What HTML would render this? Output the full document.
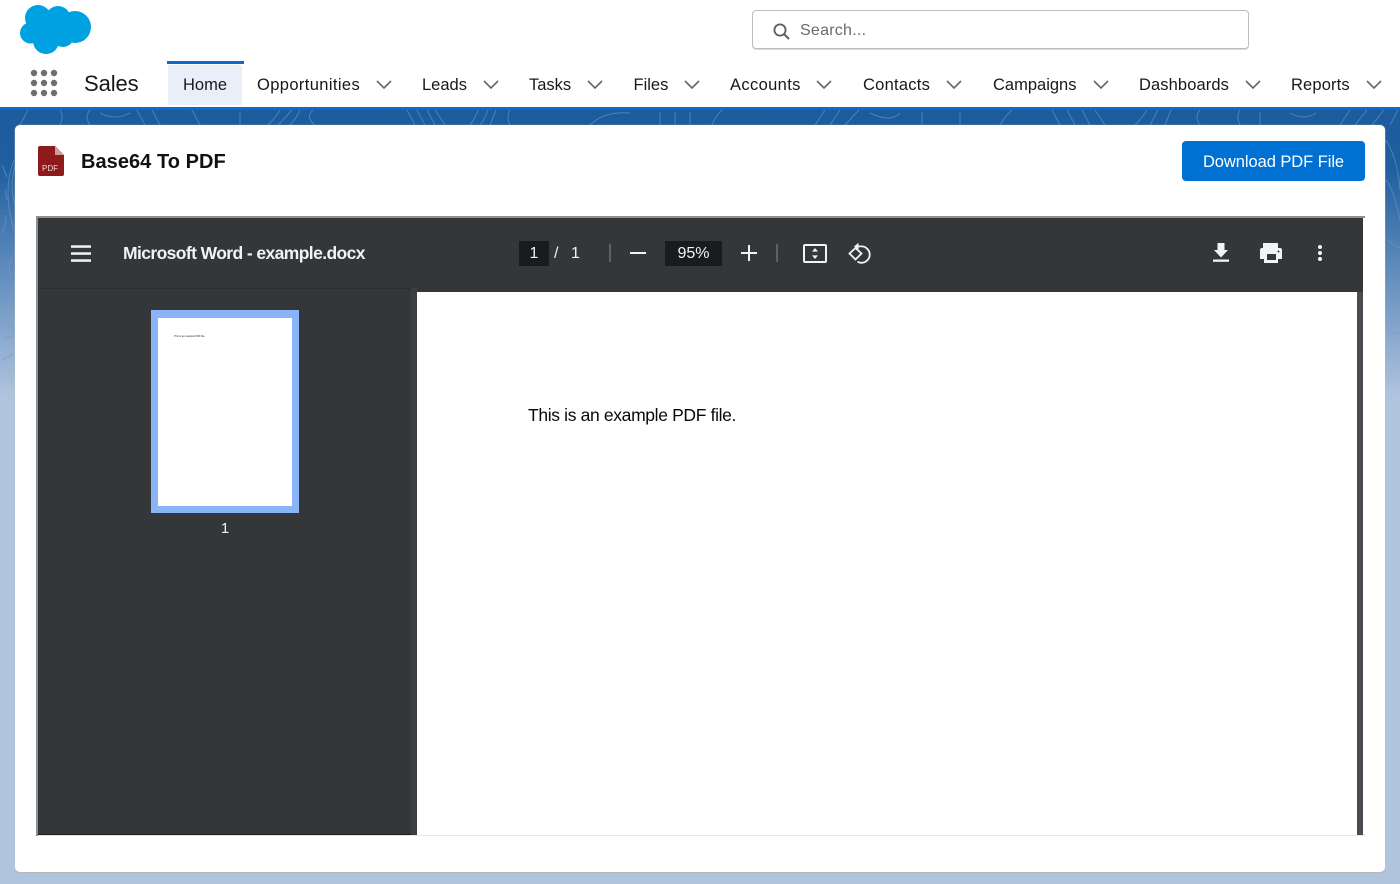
<!DOCTYPE html>
<html><head><meta charset="utf-8"><style>
html,body{margin:0;padding:0;background:#fff}
#p{position:relative;width:1400px;height:884px;overflow:hidden;font-family:"Liberation Sans",sans-serif;background:#fff}
#p div,#p span,#p svg{position:absolute;display:block}
.t{white-space:nowrap;line-height:20px}
.n{top:75px;font-size:16.5px;color:#181818}
.w{color:#fff}
</style></head><body><div id="p">
<svg style="left:18px;top:3px" width="75" height="53" viewBox="0 0 75 53"><g fill="#00a1e0"><circle cx="20" cy="15" r="13"/><circle cx="40" cy="15.500" r="12.500"/><circle cx="57" cy="24" r="16"/><circle cx="12.500" cy="30" r="10.500"/><circle cx="28" cy="38" r="13"/><circle cx="45" cy="33" r="11"/><rect x="14" y="14" width="40" height="24"/></g></svg>

<div style="left:752px;top:10px;width:495px;height:37px;border:1px solid #bdbdbd;border-radius:4px;box-shadow:0 1px 0 #ddd"></div>
<svg style="left:771px;top:21px" width="20" height="20" viewBox="0 0 20 20"><circle cx="9" cy="9" r="5.600" fill="none" stroke="#5c5c5c" stroke-width="1.800"/><path d="M13 13l5 5" stroke="#5c5c5c" stroke-width="2" fill="none"/></svg>
<div class="t" style="left:800px;top:21px;font-size:16px;color:#6b6b6b;letter-spacing:.25px">Search...</div>

<svg style="left:30px;top:69px" width="28" height="28" viewBox="0 0 28 28"><g fill="#6f6f6f"><circle cx="4" cy="4" r="3.200"/><circle cx="14" cy="4" r="3.200"/><circle cx="24" cy="4" r="3.200"/><circle cx="4" cy="14" r="3.200"/><circle cx="14" cy="14" r="3.200"/><circle cx="24" cy="14" r="3.200"/><circle cx="4" cy="24" r="3.200"/><circle cx="14" cy="24" r="3.200"/><circle cx="24" cy="24" r="3.200"/></g></svg>
<div class="t" style="left:84px;top:73px;font-size:22px;line-height:22px;color:#181818;letter-spacing:-.1px">Sales</div>

<div style="left:167px;top:61px;width:77px;height:3px;background:#0f68cf"></div>
<div style="left:168px;top:65px;width:74px;height:40px;background:#e8eff9"></div>
<div class="t n" style="left:183px">Home</div>
<div class="t n" style="left:257px;letter-spacing:.38px">Opportunities</div>
<div class="t n" style="left:422px">Leads</div>
<div class="t n" style="left:529px">Tasks</div>
<div class="t n" style="left:633.500px">Files</div>
<div class="t n" style="left:730px;letter-spacing:.36px">Accounts</div>
<div class="t n" style="left:863px;letter-spacing:.25px">Contacts</div>
<div class="t n" style="left:993px">Campaigns</div>
<div class="t n" style="left:1139px;letter-spacing:.1px">Dashboards</div>
<div class="t n" style="left:1291px;letter-spacing:.14px">Reports</div>
<svg style="left:0;top:78px" width="1400" height="14" viewBox="0 0 1400 14" fill="none" stroke="#666" stroke-width="1.600"><path d="M377 3l7 7 7-7M484 3l7 7 7-7M588 3l7 7 7-7M685 3l7 7 7-7M817 3l7 7 7-7M947 3l7 7 7-7M1094 3l7 7 7-7M1246 3l7 7 7-7M1367 3l7 7 7-7"/></svg>

<div style="left:0;top:107px;width:1400px;height:777px;background:linear-gradient(#1c5b9c 0,#1f5e9f 60px,#b0c4de 290px,#b0c4de 100%)"></div>
<div style="left:0;top:107px;width:1400px;height:3px;background:#0f68cf"></div>
<svg style="left:0;top:110px" width="1400" height="280" viewBox="0 0 1400 280" fill="none" stroke="#6f9ac8" stroke-width="1" opacity=".6">
<path d="M268 15q8-8 12-15M278 15q8-8 14-15M290 15q6-6 10-15M315 15q-10-8-2-15M415 15l-8-15M425 15l-8-15M435 15l-8-15M445 15l-10-15M470 15q6-8 8-15M480 15q6-8 8-15M490 15l6-15M510 15q-4-8 0-15M590 15q14-14 40-12M660 15v-13M675 15v-13M690 15v-13M712 15q4-10 10-15M815 15l10-15M830 15l10-15M845 15l14-15M870 3q20 10 30 0M922 15v-13M960 15v-13M1000 15q6-10 12-15M1060 15l-8-15M1075 15l-8-15M1090 15l-8-15M1105 15l-10-15M1135 15q8-8 12-15M1150 15l8-15M1165 15l6-15M1200 15q-6-8 0-15M1240 15q-4-8 0-15M1260 15v-13M1290 3q14 8 26 0M1340 15l10-15M1355 15l12-15M1372 15l12-15M1390 15l8-15M20 15l8-15M60 15q4-8 0-15M90 15q-6-8 0-15M100 3q15 8 30 0M145 15l-8-15M160 15l-8-15M200 15l-8-15M240 15v-13"/>
<path d="M14 120q-12-40 0-70M15 95q-6-20 0-40M2 55l5 12M5 80l2 10M6 105q0 12-4 18M14 145q-8 10-2 22M8 215q6 3 7 8M2 225q5 6 12 0M2 250q6-3 12-6"/>
<path d="M1386 30q12 20 14 50M1386 70q8 10 14 40M1388 130q6 6 12 8M1390 170q4 20 10 30M1388 220q6 4 12 4"/>
</svg>

<div style="left:15px;top:125px;width:1370px;height:747px;background:#fff;border-radius:5px;box-shadow:0 1px 1px #b9b5ae,0 0 1px #c9c9c9"></div>

<svg style="left:37px;top:145px" width="28" height="32" viewBox="0 0 28 32"><path d="M3 1h15l9 9v19a2 2 0 0 1-2 2H3a2 2 0 0 1-2-2V3a2 2 0 0 1 2-2z" fill="#8e1a1c"/><path d="M18 1l9 9h-9z" fill="#d19a98"/><text x="13" y="26" font-family="Liberation Sans" font-size="8" fill="#f0d8d8" text-anchor="middle">PDF</text></svg>
<div class="t" style="left:81px;top:151px;font-size:20px;line-height:22px;font-weight:bold;color:#111;letter-spacing:.05px">Base64 To PDF</div>

<div style="left:1182px;top:141px;width:183px;height:40px;background:#0070d2;border-radius:4px"></div>
<div class="t w" style="left:1182px;width:183px;top:152px;text-align:center;font-size:16.500px;letter-spacing:-.06px">Download PDF File</div>

<div style="left:36px;top:216px;width:1329px;height:620px;background:#e6e6e6"></div>
<div style="left:38px;top:218px;width:1327px;height:616px;background:#fff"></div>
<div style="left:36px;top:216px;width:1329px;height:2px;background:#8f8f8f"></div>
<div style="left:36px;top:216px;width:2px;height:620px;background:#8f8f8f"></div>
<div style="left:38px;top:218px;width:1325px;height:617px;background:#34373a"></div>
<div style="left:38px;top:834px;width:1325px;height:1px;background:#1d1f21"></div>
<div style="left:38px;top:288px;width:373px;height:1px;background:#2a2c2e"></div>
<div style="left:411px;top:288px;width:6px;height:547px;background:#3c3f42"></div>
<div style="left:1357px;top:292px;width:6px;height:543px;background:#494c50"></div>

<svg style="left:71px;top:244px" width="20" height="18" viewBox="0 0 20 18" fill="#f1f3f4"><rect y="1.300" width="20" height="2.500"/><rect y="8.300" width="20" height="2.500"/><rect y="15.300" width="20" height="2.500"/></svg>
<div class="t w" style="left:123px;top:243px;font-size:17.500px;font-weight:bold;letter-spacing:-.6px;color:#f1f3f4">Microsoft Word - example.docx</div>

<div style="left:519px;top:241px;width:30px;height:25px;background:#191b1c"></div>
<div class="t w" style="left:519px;width:30px;top:244px;text-align:center;font-size:16px;color:#f1f3f4">1</div>
<div class="t w" style="left:554px;top:244px;font-size:16px;color:#f1f3f4">/</div>
<div class="t w" style="left:571px;top:244px;font-size:16px;color:#f1f3f4">1</div>
<div style="left:609px;top:244px;width:2px;height:18px;background:#5f6265"></div>
<div style="left:630px;top:252px;width:16px;height:2px;background:#f1f3f4"></div>
<div style="left:665px;top:241px;width:57px;height:25px;background:#191b1c"></div>
<div class="t w" style="left:665px;width:57px;top:244px;text-align:center;font-size:16px;color:#f1f3f4">95%</div>
<div style="left:741px;top:252px;width:16px;height:2px;background:#f1f3f4"></div>
<div style="left:748px;top:245px;width:2px;height:16px;background:#f1f3f4"></div>
<div style="left:776px;top:244px;width:2px;height:18px;background:#5f6265"></div>
<svg style="left:803px;top:243px" width="24" height="21" viewBox="0 0 24 21"><rect x="1" y="2" width="22" height="17" rx="1" fill="none" stroke="#f1f3f4" stroke-width="2"/><path d="M12 5l3 3.600H9zM12 16l3-3.600H9z" fill="#f1f3f4"/></svg>
<svg style="left:848px;top:241px" width="24" height="25" viewBox="0 0 24 25" fill="none" stroke="#f1f3f4" stroke-width="1.800"><path d="M7.500 7L1.500 12.500l6 6 6-6z"/><path d="M10.500 5.400h3a8.200 8.200 0 0 1 0 16.400 8 8 0 0 1-4-1.200"/><path d="M10.500 1.700V9L6 5.500z" fill="#f1f3f4" stroke="none"/></svg>

<svg style="left:1213px;top:243px" width="16" height="20" viewBox="0 0 16 20" fill="#f1f3f4"><path d="M4.500 0h7v7H15l-7 7.500L1 7h3.500z"/><rect y="16.500" width="16" height="2.300"/></svg>
<svg style="left:1259px;top:243px" width="24" height="21" viewBox="0 0 24 21"><path d="M4 0h15v5H4z" fill="#f1f3f4"/><path d="M3 5h18a2 2 0 0 1 2 2v9h-4v4H5v-4H1V7a2 2 0 0 1 2-2z" fill="#f1f3f4"/><rect x="8" y="11" width="9" height="6" fill="#34373a"/><circle cx="19.500" cy="8.500" r="1" fill="#34373a"/></svg>
<svg style="left:1315px;top:244px" width="10" height="18" viewBox="0 0 10 18" fill="#f1f3f4"><circle cx="5" cy="3" r="2"/><circle cx="5" cy="9" r="2"/><circle cx="5" cy="15" r="2"/></svg>

<div style="left:151px;top:310px;width:148px;height:203px;background:#8ab4f8"></div>
<div style="left:158px;top:318px;width:134px;height:188px;background:#fff"></div>
<div class="t" style="left:174px;top:327px;font-size:2.500px;color:#222">This is an example PDF file.</div>
<div class="t w" style="left:151px;width:148px;top:519px;text-align:center;font-size:15px;color:#f1f3f4">1</div>

<div style="left:417px;top:292px;width:940px;height:543px;background:#fff"></div>
<div class="t" style="left:528px;top:405px;font-size:17.500px;color:#0a0a0a;letter-spacing:-.35px">This is an example PDF file.</div>
</div></body></html>
